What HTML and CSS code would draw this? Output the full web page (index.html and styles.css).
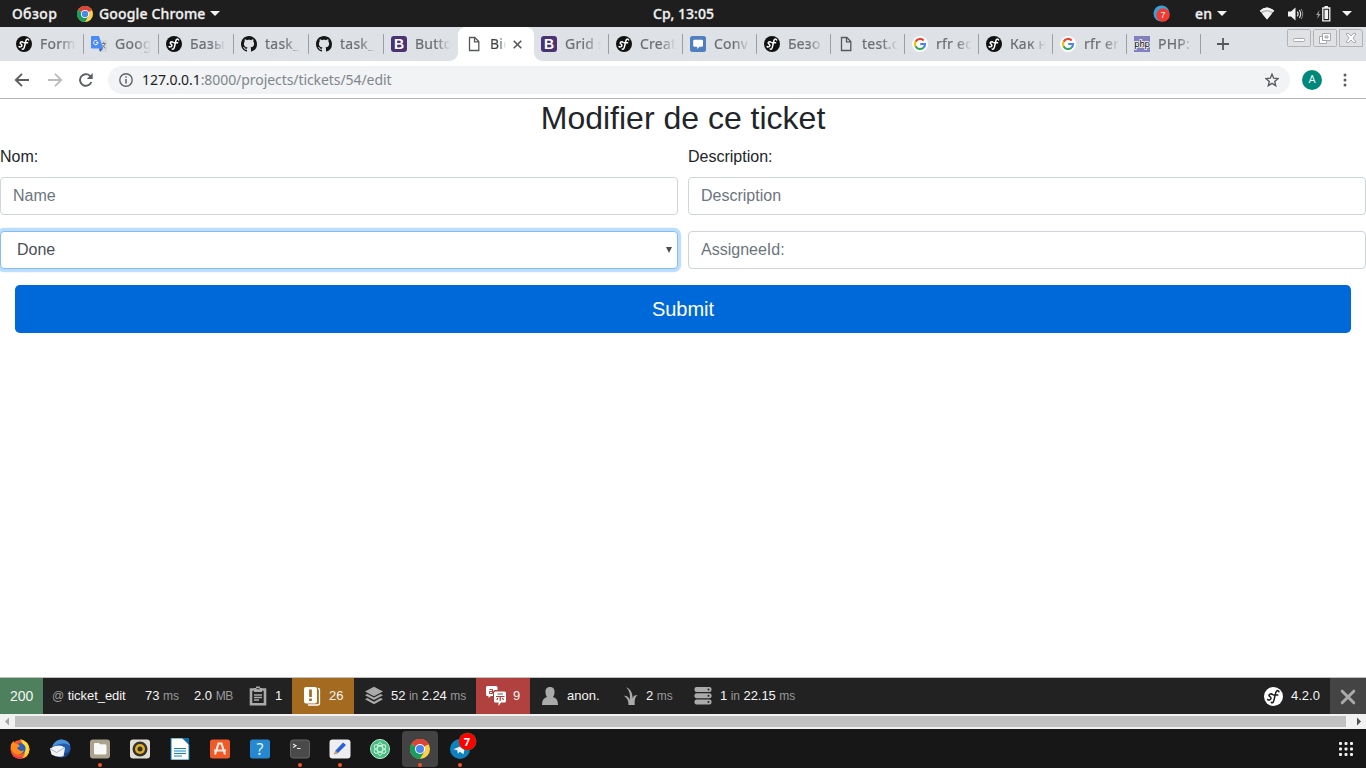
FILE: index.html
```html
<!DOCTYPE html>
<html lang="fr">
<head>
<meta charset="utf-8">
<title>Modifier de ce ticket</title>
<link rel="stylesheet" href="styles.css">
</head>
<body>
<svg class="sprite" aria-hidden="true">
  <symbol id="sf" viewBox="0 0 16 16"><circle cx="8" cy="8" r="8" fill="#111"/><g fill="none" stroke="#fff" stroke-linecap="round"><path d="M7 6.300Q6.500 5.500 5 6q-1.600 1 .1 2.200 1.600 1.300 0 2.500-1.400.7-2-.2" stroke-width="1.500"/><path d="M12.600 4q-.6-1.500-2-.6C9.300 4.300 9 11 7.800 12.600q-.8 1.100-1.600.4M8 6.700h3.600" stroke-width="1.500"/></g></symbol>
  <symbol id="sf-light" viewBox="0 0 16 16"><circle cx="8" cy="8" r="8" fill="#fff"/><g fill="none" stroke="#1c1c1c" stroke-linecap="round"><path d="M7 6.300Q6.500 5.500 5 6q-1.600 1 .1 2.200 1.600 1.300 0 2.500-1.400.7-2-.2" stroke-width="1.300"/><path d="M12.600 4q-.6-1.500-2-.6C9.300 4.300 9 11 7.800 12.600q-.8 1.100-1.600.4M8 6.700h3.600" stroke-width="1.300"/></g></symbol>
  <symbol id="github" viewBox="0 0 16 16"><path fill="#161616" d="M8 0C3.58 0 0 3.58 0 8c0 3.54 2.29 6.53 5.47 7.59.4.07.55-.17.55-.38 0-.19-.01-.82-.01-1.49-2.01.37-2.53-.49-2.69-.94-.09-.23-.48-.94-.82-1.13-.28-.15-.68-.52-.01-.53.63-.01 1.08.58 1.23.82.72 1.21 1.87.87 2.33.66.07-.52.28-.87.51-1.07-1.78-.2-3.64-.89-3.64-3.95 0-.87.31-1.59.82-2.15-.08-.2-.36-1.02.08-2.12 0 0 .67-.21 2.2.82.64-.18 1.32-.27 2-.27s1.36.09 2 .27c1.53-1.04 2.2-.82 2.2-.82.44 1.1.16 1.92.08 2.12.51.56.82 1.27.82 2.15 0 3.07-1.87 3.75-3.65 3.95.29.25.54.73.54 1.48 0 1.07-.01 1.93-.01 2.2 0 .21.15.46.55.38A8.01 8.01 0 0 0 16 8c0-4.42-3.58-8-8-8z"/></symbol>
  <symbol id="file" viewBox="0 0 16 16"><path d="M3.500 1.500h5.300l4 4v9H3.500zM8.500 1.500v4.300h4.300" fill="none" stroke="#55585c" stroke-width="1.300"/></symbol>
  <symbol id="google" viewBox="0 0 16 16"><circle cx="8" cy="8" r="8" fill="#fff"/><g fill="none" stroke-width="2.100"><path d="M11.700 4.400A5 5 0 0 0 3.600 5.700" stroke="#ea4335"/><path d="M3.600 5.600a5 5 0 0 0 0 4.800" stroke="#fbbc05"/><path d="M3.600 10.300a5 5 0 0 0 7.800 1.400" stroke="#34a853"/><path d="M11.300 11.800A5 5 0 0 0 13 8H8.200" stroke="#4285f4"/></g></symbol>
  <symbol id="chrome" viewBox="0 0 20 20"><circle cx="10" cy="10" r="10" fill="#fdd04c"/><path d="M10 10 1.300 5A10 10 0 0 1 18.700 5z" fill="#dc4437"/><path d="M10 10 1.300 5A10 10 0 0 0 10 20l4.300-7.500z" fill="#1a9c5b"/><path d="M10 5h8.700" stroke="#dc4437"/><circle cx="10" cy="10" r="5" fill="#fff"/><circle cx="10" cy="10" r="4" fill="#4a87f0"/></symbol>
  <symbol id="tri" viewBox="0 0 10 5"><path d="M0 0h10L5 5z" fill="#f2f2f2"/></symbol>
</svg>

<header class="topbar">
  <span class="overview">Обзор</span>
  <svg class="i16 top-chrome"><use href="#chrome"/></svg>
  <span class="app">Google Chrome</span>
  <svg class="tri"><use href="#tri"/></svg>
  <span class="clock">Ср, 13:05</span>
  <svg class="tray-tg" viewBox="0 0 18 18"><circle cx="8.500" cy="8.500" r="8" fill="#34a3dc"/><circle cx="10" cy="10" r="6.700" fill="#f5392f"/><text x="10" y="13.300" class="tray-num">7</text></svg>
  <span class="lang">en</span>
  <svg class="tri"><use href="#tri"/></svg>
  <svg class="wifi" viewBox="0 0 16 13"><path d="M.8 3.800Q8-2.600 15.200 3.800L8 12.400z" fill="#bbb"/><path d="M.8 3.800Q8-2.600 15.200 3.800l-1 1.300Q8 1 1.800 5zM3 6.400Q8 2.400 13 6.400l-5 6z" fill="#f2f2f2"/></svg>
  <svg class="sound" viewBox="0 0 16 14"><path d="M0 4.500h3L7.500.500v13L3 9.500H0z" fill="#f2f2f2"/><path d="M9.300 4.600q1.700 2.400 0 4.800M11.300 3q2.800 4 0 8" fill="none" stroke="#ddd" stroke-width="1.200"/><path d="M13.200 2q3.200 5 0 10" fill="none" stroke="#888"/></svg>
  <svg class="battery" viewBox="0 0 15 16"><path d="M3.600 4 0 9h2l-.8 4L4.600 8h-2z" fill="#999"/><path d="M6.800 2h7v12.800h-7z" fill="none" stroke="#f2f2f2" stroke-width="1.300"/><path d="M8.500 0h3.500v2H8.500zM8.500 3.800h3.600v9.200H8.500z" fill="#f2f2f2"/></svg>
  <svg class="tri"><use href="#tri"/></svg>
</header>

<nav class="tabs">
  <div class="tab"><svg class="i16"><use href="#sf"/></svg><span>Form</span></div>
  <div class="tab"><svg class="i16" viewBox="0 0 16 16"><path d="M7 4h9v12H9z" fill="#d5d7da"/><path d="M1 0h7l4 12.500H1a1 1 0 0 1-1-1V1a1 1 0 0 1 1-1z" fill="#4a8af4"/><path d="M8 12.500h4L9 16z" fill="#3457c8"/><path d="M6.500 5.200a2.200 2.200 0 1 0 .5 1.500H5" fill="none" stroke="#fff"/><path d="M10.500 7.500H15M12.700 6v1.500M14 7.500q-1 3.500-3 4.500M11.500 9q1 2 3 3.200" fill="none" stroke="#75818c"/></svg><span>Goog</span></div>
  <div class="tab"><svg class="i16"><use href="#sf"/></svg><span>Базы</span></div>
  <div class="tab"><svg class="i16"><use href="#github"/></svg><span>task_</span></div>
  <div class="tab"><svg class="i16"><use href="#github"/></svg><span>task_</span></div>
  <div class="tab no-line"><b class="boot">B</b><span>Butto</span></div>
  <div class="tab active"><svg class="i16"><use href="#file"/></svg><span>Bie</span><svg class="tab-x" viewBox="0 0 9 9"><path d="m.7.7 7.600 7.600m0-7.600L.7 8.300" stroke="#55585c" stroke-width="1.600"/></svg></div>
  <div class="tab"><b class="boot">B</b><span>Grid s</span></div>
  <div class="tab slim"><svg class="i16"><use href="#sf"/></svg><span>Creat</span></div>
  <div class="tab slim"><svg class="i16" viewBox="0 0 16 16"><rect width="16" height="16" rx="2.500" fill="#4f7fbd"/><path d="M4.500 3.800h7.200q1.300 0 1.300 1.300v4.400q0 1.300-1.300 1.300H9.500L7.200 13v-2.200H4.500q-1.300 0-1.300-1.300V5.100q0-1.300 1.300-1.300z" fill="#fff"/></svg><span>Conv</span></div>
  <div class="tab slim"><svg class="i16"><use href="#sf"/></svg><span>Безо</span></div>
  <div class="tab slim"><svg class="i16"><use href="#file"/></svg><span>test.c</span></div>
  <div class="tab slim"><svg class="i16"><use href="#google"/></svg><span>rfr ec</span></div>
  <div class="tab slim"><svg class="i16"><use href="#sf"/></svg><span>Как н</span></div>
  <div class="tab slim"><svg class="i16"><use href="#google"/></svg><span>rfr er</span></div>
  <div class="tab slim"><svg class="i16" viewBox="0 0 16 16"><rect width="16" height="16" fill="#8180bd"/><text x="8" y="10.500" class="php-text">php</text></svg><span>PHP:</span></div>
  <svg class="plus" viewBox="0 0 12 12"><path d="M6 0v12M0 6h12" stroke="#55585c" stroke-width="1.800"/></svg>
  <div class="win">
    <svg viewBox="0 0 24 18"><rect x=".5" y=".5" width="23" height="17" rx="1"/><rect x="6.500" y="9.500" width="11" height="3" rx="1" class="glyph"/></svg>
    <svg viewBox="0 0 24 18"><rect x=".5" y=".5" width="23" height="17" rx="1"/><path d="M9.500 4.500h8v7h-8zM12 7h3v2h-3zM6.500 7.500h3v4h4v3h-7z" class="glyph"/></svg>
    <svg viewBox="0 0 24 18"><path d="M.5.500h20q3 0 3 3v14H.5z"/><path d="m7 5 2-1 3 3 3-3 2 1-3 4 3 4-2 1-3-3-3 3-2-1 3-4z" class="glyph"/></svg>
  </div>
</nav>

<div class="addressbar">
  <svg class="nav-i back" viewBox="0 0 16 14"><path d="M15 7H2M8 .8 1.800 7 8 13.200" fill="none" stroke="#5a5d61" stroke-width="1.900"/></svg>
  <svg class="nav-i fwd" viewBox="0 0 16 14"><path d="M1 7h13M8 .8 14.200 7 8 13.200" fill="none" stroke="#babcbe" stroke-width="1.900"/></svg>
  <svg class="reload" viewBox="0 0 14 14"><path d="M12.300 9A5.800 5.800 0 1 1 11 2.900l1.500 1.500" fill="none" stroke="#5a5d61" stroke-width="1.900"/><path d="M13.700 0v6H7.800z" fill="#5a5d61"/></svg>
  <div class="url">
    <svg class="info" viewBox="0 0 14 14"><circle cx="7" cy="7" r="6.200" fill="none" stroke="#5f6368" stroke-width="1.400"/><path d="M7 6v4.500M7 3.300v1.500" stroke="#5f6368" stroke-width="1.500"/></svg>
    <span class="url-text"><b>127.0.0.1</b>:8000/projects/tickets/54/edit</span>
    <svg class="star" viewBox="0 0 14 14"><path d="m7 1.200 1.700 4 4.300.4-3.300 2.800 1 4.300L7 10.400l-3.700 2.300 1-4.300L1 5.600l4.300-.4z" fill="none" stroke="#5a5d61" stroke-width="1.400"/></svg>
  </div>
  <span class="avatar">A</span>
  <svg class="dots" viewBox="0 0 4 14"><g fill="#5a5d61"><circle cx="2" cy="2" r="1.500"/><circle cx="2" cy="7" r="1.500"/><circle cx="2" cy="12" r="1.500"/></g></svg>
</div>

<main class="page">
  <h2>Modifier de ce ticket</h2>
  <form class="ticket-form">
    <div class="field"><label for="nom">Nom:</label><input id="nom" placeholder="Name"></div>
    <div class="field"><label for="desc">Description:</label><input id="desc" placeholder="Description"></div>
    <div class="select"><span>Done</span><svg class="caret" viewBox="0 0 6 6"><path d="M0 0h6L3 6z" fill="#495057"/></svg></div>
    <input placeholder="AssigneeId:">
    <button type="button" class="submit">Submit</button>
  </form>
</main>

<section class="debug">
  <div class="blk status">200</div>
  <div class="blk route"><p><i>@</i> ticket_edit</p></div>
  <div class="blk time"><p>73 <i>ms</i></p></div>
  <div class="blk memory"><p>2.0 <i>MB</i></p></div>
  <div class="blk forms"><svg viewBox="0 0 18 20"><path d="M2 3.500h14v14.800H2z" fill="none" stroke="#aaa" stroke-width="2.600"/><path d="M5 2h2V.500h4V2h2v4H5z" fill="#aaa"/><path d="M7.500 2.700h3" stroke="#222"/><path d="M5 9h8M5 11.500h8M5 14h5" stroke="#aaa" stroke-width="1.400"/></svg><p>1</p></div>
  <div class="blk warn"><svg viewBox="0 0 18 20"><path d="M15 2.500q1.500 0 1.500 1.500v13q0 2-2 2H5" fill="none" stroke="#fff" stroke-width="1.300"/><rect x="1" y="1" width="13" height="16.500" rx="2" fill="#fff"/><path d="M7.500 3.500v7.500M7.500 12.500v2.500" stroke="#a46a1f" stroke-width="2.700"/></svg><p>26</p></div>
  <div class="blk cache"><svg viewBox="0 0 18 20"><g fill="#aaa"><path d="m9 .8 9 4.700-9 4.700-9-4.700z"/><path d="m0 9.200 2.300-1.200L9 11.600 15.700 8 18 9.200l-9 4.900z"/><path d="m0 13.300 2.300-1.200L9 15.700l6.700-3.600 2.300 1.200-9 5z"/></g></svg><p>52 <i>in</i> 2.24 <i>ms</i></p></div>
  <div class="blk trans"><svg viewBox="0 0 20 20"><path d="M1.500 0H10q1.500 0 1.500 1.500V4H9q-2 0-2 2v4H5l-2.500 2v-2H1.500Q0 10 0 8.500v-7Q0 0 1.500 0z" fill="#fff"/><path d="M3.500 3.500h3v4h-3v-2h3" fill="none" stroke="#b13d3c"/><path d="M9.500 5.500h9q1.500 0 1.500 1.500v8q0 1.500-1.500 1.500H15L12.500 20v-3.500h-3Q8 16.500 8 15V7q0-1.500 1.500-1.500z" fill="#fff"/><path d="M11.500 8h5.500M10 10.500h8.500M14.200 10.500v4.500M11.800 12l-1 2M16.500 12l1 2" stroke="#b13d3c" stroke-width="1.200"/></svg><p>9</p></div>
  <div class="blk user"><svg viewBox="0 0 16 18"><path d="M8 0q4.600 0 4.600 4.800Q12.600 8 11 10q5 1.200 5 7.200v.8H0v-.8Q0 11.200 5 10 3.400 8 3.400 4.800 3.400 0 8 0z" fill="#aaa"/></svg><p>anon.</p></div>
  <div class="blk twig"><svg viewBox="0 0 14 18"><path d="M2 0q6.500 2.500 6.800 11.500Q9.500 7 14 8.500q-4 .5-3.300 9.500H4.500Q5 12.500 0 8.800q4-.3 5.800 4.200Q7 5 2 0z" fill="#aaa"/></svg><p>2 <i>ms</i></p></div>
  <div class="blk db"><svg viewBox="0 0 18 18"><g fill="#aaa"><rect width="17" height="5" x=".5" rx="2"/><rect x=".5" y="6.300" width="17" height="5" rx="2"/><rect x=".5" y="12.600" width="17" height="5" rx="2"/></g><g fill="#222"><circle cx="14.500" cy="2.500" r="1"/><circle cx="14.500" cy="8.800" r="1"/><circle cx="14.500" cy="15.100" r="1"/></g></svg><p>1 <i>in</i> 22.15 <i>ms</i></p></div>
  <div class="blk version"><svg><use href="#sf-light"/></svg><p>4.2.0</p></div>
  <div class="blk close"><svg viewBox="0 0 16 16"><path d="m2.200 2.200 11.600 11.600m0-11.600L2.200 13.800" stroke="#aaa" stroke-width="3" stroke-linecap="round"/></svg></div>
</section>

<div class="scroll">
  <svg viewBox="0 0 15 15"><path d="M9 3.500v8L5 7.500z" fill="#a3a3a3"/></svg>
  <div class="thumb"></div>
  <svg class="sright" viewBox="0 0 15 15"><path d="M6 3.500v8l4-4z" fill="#505050"/></svg>
</div>

<footer class="dock">
  <div class="app-i"><svg viewBox="0 0 20 20"><circle cx="10" cy="10.500" r="9.500" fill="#fb5a22"/><path d="M10 0q9 2 9.500 10.500Q19 18 11.500 19.500 18 13 14 7z" fill="#ffcb2e"/><path d="M12 1q7 3 6 10l-3 4-2-9z" fill="#ffde3a"/><circle cx="10" cy="9.800" r="5.700" fill="#2c5fb5"/><path d="M.6 8Q1 4 3.500 2l1 2.500Q8 4 10 7L7 9q2 4 7 2.500Q12 16 7.500 15.500 2 15 .6 8z" fill="#ff8a1e"/><path d="M.6 9q1 7 6 8.500t9-1Q12 20 8 19.800 1 18 .6 9z" fill="#e9325d"/></svg></div>
  <div class="app-i"><svg viewBox="0 0 22 20"><circle cx="12.500" cy="9.500" r="9" fill="#245cac"/><path d="M3 8Q6 0 13 .500q7 .5 8.500 7Q16 1.500 3 8z" fill="#4c90d9"/><path d="M1 9.500q6-4 12-2.500l3 2-1.500 8Q9 19 2.500 15.500z" fill="#f0f2f5"/><path d="m1 9.500 6.500 4L16 8.500" fill="none" stroke="#abb7c7"/><path d="M15 18.500q6-2 6.500-9-2 5-6 4.500z" fill="#17407f"/></svg></div>
  <div class="app-i run"><svg viewBox="0 0 20 20"><rect y=".5" width="20" height="19" rx="3" fill="#aba28d"/><path d="M4 5q0-1 1-1h4l1 1.300h5q1.500 0 1.500 1.500V14q0 1.500-1.500 1.500H5.500Q4 15.500 4 14z" fill="#f8f8f6"/></svg></div>
  <div class="app-i"><svg viewBox="0 0 20 20"><rect y=".5" width="20" height="19" rx="3" fill="#e1ded6"/><circle cx="10" cy="10" r="7.500" fill="#34332f"/><circle cx="10" cy="10" r="5" fill="#e4ae20"/><circle cx="10" cy="10" r="2.500" fill="#34332f"/></svg></div>
  <div class="app-i"><svg viewBox="0 0 20 22"><path d="M1 0h12l6 6v16H1z" fill="#fff"/><path d="M1 0h12l6 6v16H1z" fill="none" stroke="#0c7bb0"/><path d="M12 0h7v7z" fill="#0c6da5"/><path d="M4 10.500h12M4 13h12M4 15.500h12M4 18h8" stroke="#1384be" stroke-width="1.100"/></svg></div>
  <div class="app-i"><svg viewBox="0 0 20 20"><rect y=".5" width="20" height="19" rx="2.500" fill="#ee5b28"/><path d="m5 15.500 3.500-11h3l3.500 11M4 11.500h12" fill="none" stroke="#ffe9e0" stroke-width="2.100"/></svg></div>
  <div class="app-i"><svg viewBox="0 0 20 20"><rect y=".5" width="20" height="19" rx="2.500" fill="#2588d0"/><text x="10" y="15.500" class="help-text">?</text></svg></div>
  <div class="app-i run"><svg viewBox="0 0 20 20"><rect x=".5" y="1" width="19" height="18" rx="2.500" fill="#4a4a4a" stroke="#666"/><path d="m3 5 3 1.700-3 1.700M7 9.500h3.500" fill="none" stroke="#eee" stroke-width="1.100"/></svg></div>
  <div class="app-i run"><svg viewBox="0 0 22 20"><rect x=".5" y=".5" width="21" height="19" rx="3" fill="#eeedf0"/><path d="m5 15.500 1.500-4L14 3.500l3 2.500L9 14z" fill="#2b5fd9"/><path d="m5 15.500 1.500-4L9 14z" fill="#d9a55e"/></svg></div>
  <div class="app-i"><svg viewBox="0 0 20 20"><circle cx="10" cy="10" r="9.500" fill="#45bd80" stroke="#c3ecd5"/><g fill="none" stroke="#d4f4e2" stroke-width=".9"><ellipse cx="10" cy="10" rx="2.700" ry="6.500"/><ellipse cx="10" cy="10" rx="2.700" ry="6.500" transform="rotate(60 10 10)"/><ellipse cx="10" cy="10" rx="2.700" ry="6.500" transform="rotate(120 10 10)"/></g></svg></div>
  <div class="app-i run current"><svg><use href="#chrome"/></svg></div>
  <div class="app-i run"><svg viewBox="0 0 20 20"><circle cx="10" cy="10" r="10" fill="#0f82be"/><path d="m3.500 10.200 12-5-2 10-3.600-2.500-2 2-.6-3.500z" fill="#eaf4fa"/></svg><b class="badge">7</b></div>
  <svg class="grid" viewBox="0 0 14 14"><g fill="#f2f2f2"><rect width="3" height="3" rx="1"/><rect x="5.500" width="3" height="3" rx="1"/><rect x="11" width="3" height="3" rx="1"/><rect y="5.500" width="3" height="3" rx="1"/><rect x="5.500" y="5.500" width="3" height="3" rx="1"/><rect x="11" y="5.500" width="3" height="3" rx="1"/><rect y="11" width="3" height="3" rx="1"/><rect x="5.500" y="11" width="3" height="3" rx="1"/><rect x="11" y="11" width="3" height="3" rx="1"/></g></svg>
</footer>
</body>
</html>
```
FILE: styles.css
```css
* { box-sizing: border-box; }
body {
  margin: 0;
  width: 1366px;
  height: 768px;
  overflow: hidden;
  display: flex;
  flex-direction: column;
  background: #fff;
  font-family: "Liberation Sans", Arial, sans-serif;
}
svg { display: block; flex: none; }
.sprite { display: none; }
.i16 { width: 16px; height: 16px; }
.boot {
  width: 16px;
  height: 16px;
  border-radius: 3px;
  background: #4b3273;
  color: #fff;
  font: bold 14px/16px "Liberation Sans", sans-serif;
  text-align: center;
}
.php-text {
  font: 8.5px "DejaVu Sans", sans-serif;
  text-anchor: middle;
  fill: #000;
  stroke: #fff;
  stroke-width: 1.6px;
  paint-order: stroke;
  letter-spacing: -.3px;
}
.help-text { font: 16px "Noto Sans", sans-serif; text-anchor: middle; fill: #e8f5ff; }

/* desktop top bar */
.topbar {
  height: 27px;
  flex: none;
  display: flex;
  align-items: center;
  background: #1e1e1e;
  color: #f0f0f0;
  font: 500 14px/27px "Noto Sans", sans-serif;
  letter-spacing: .15px;
  -webkit-text-stroke: .3px #f0f0f0;
  white-space: nowrap;
}
.tri { width: 10px; height: 5px; }
.overview { margin-left: 12px; width: 65px; letter-spacing: .4px; }
.app { margin-left: 6px; width: 111px; }
.clock { margin-left: 433px; width: 500px; letter-spacing: 0; }
.tray-tg { width: 18px; height: 18px; }
.tray-num { font: 9px "Liberation Sans", sans-serif; text-anchor: middle; fill: #fff; -webkit-text-stroke: 0; }
.lang { margin-left: 24px; width: 22px; }
.wifi { width: 16px; height: 13px; margin-left: 32px; }
.sound { width: 16px; height: 14px; margin-left: 13px; }
.battery { width: 15px; height: 16px; margin: 0 11px 0 12px; }

/* tab strip */
.tabs {
  height: 34px;
  flex: none;
  display: flex;
  align-items: center;
  padding-left: 9px;
  background: #dee1e6;
}
.tab {
  width: 75px;
  height: 34px;
  flex: none;
  display: flex;
  align-items: center;
  padding-left: 7px;
  background: linear-gradient(#9c9fa4, #9c9fa4) right center / 1px 20px no-repeat;
}
.slim { width: 74px; }
.no-line { width: 74px; background: none; }
.tab span {
  width: 36px;
  margin-left: 8px;
  overflow: hidden;
  white-space: nowrap;
  color: #6b6e73;
  font: 14px/20px "Noto Sans", sans-serif;
  letter-spacing: .25px;
  -webkit-text-stroke: .2px #6b6e73;
  -webkit-mask-image: linear-gradient(90deg, #000 55%, transparent);
  mask-image: linear-gradient(90deg, #000 55%, transparent);
}
.tab.active {
  position: relative;
  width: 76px;
  padding-left: 8px;
  background: #fff;
  border-radius: 8px 8px 0 0;
}
.tab.active::before, .tab.active::after {
  content: "";
  position: absolute;
  bottom: 0;
  width: 8px;
  height: 8px;
}
.tab.active::before { left: -8px; background: radial-gradient(circle at 0 0, transparent 7.5px, #fff 8px); }
.tab.active::after { right: -8px; background: radial-gradient(circle at 100% 0, transparent 7.5px, #fff 8px); }
.tab.active span { width: 16px; color: #3c4043; }
.tab-x { width: 9px; height: 9px; margin-left: 7px; }
.plus { width: 12px; height: 12px; margin-left: 16px; }
.win { display: flex; gap: 2px; margin: -12px 0 0 58px; }
.win svg { width: 24px; height: 18px; fill: #dfe1e5; stroke: #b3b3b3; }
.win .glyph { fill: #fff; fill-rule: evenodd; stroke: #a0a0a3; stroke-width: .9; }

/* address bar */
.addressbar {
  height: 38px;
  flex: none;
  display: flex;
  align-items: center;
  border-bottom: 1px solid #b5b4b6;
  background: #fff;
}
.nav-i { width: 16px; height: 14px; }
.back { margin-left: 14px; }
.fwd { margin-left: 17px; }
.reload { width: 14px; height: 14px; margin-left: 16px; }
.url {
  width: 1182px;
  height: 28px;
  margin-left: 15px;
  padding: 0 11px;
  display: flex;
  align-items: center;
  border-radius: 14px;
  background: #f1f3f4;
}
.info { width: 14px; height: 14px; }
.url-text { flex: 1; margin-left: 9px; color: #80868b; font: 14px/20px "Noto Sans", sans-serif; letter-spacing: -.07px; }
.url-text b { font-weight: 400; color: #202124; }
.star { width: 14px; height: 14px; }
.avatar {
  width: 20px;
  height: 20px;
  margin-left: 12px;
  border-radius: 50%;
  background: #00897b;
  color: #fff;
  font: 11px/20px Roboto, sans-serif;
  text-align: center;
}
.dots { width: 4px; height: 14px; margin-left: 20.500px; }

/* page content */
.page { height: 579px; flex: none; color: #212529; border-bottom: 1px solid #bfbfbf; }
.page h2 { margin: 0 0 8px; font-size: 32px; line-height: 38.4px; font-weight: 400; text-align: center; }
.ticket-form { display: grid; grid-template-columns: 1fr 1fr; gap: 16px 10px; }
.field { display: flex; flex-direction: column; gap: 8px; line-height: 24px; }
.ticket-form input, .select {
  width: 100%;
  height: 38px;
  padding: 6px 12px;
  border: 1px solid #ced4da;
  border-radius: 4px;
  background: #fff;
  color: #495057;
  font: 16px/24px "Liberation Sans", Arial, sans-serif;
}
.ticket-form input::placeholder { color: #6c757d; opacity: 1; }
.ticket-form .select {
  display: flex;
  align-items: center;
  justify-content: space-between;
  padding: 0 5px 0 16px;
  border-color: #80bdff;
  box-shadow: 0 0 0 3.2px rgba(0, 123, 255, .25);
}
.caret { width: 6px; height: 6px; }
.submit {
  grid-column: 1 / -1;
  height: 48px;
  margin: 0 15px;
  border: 0;
  border-radius: 4.8px;
  background: #0069d9;
  color: #fff;
  font: 20px/30px "Liberation Sans", Arial, sans-serif;
}

/* profiler toolbar */
.debug { height: 36px; flex: none; display: flex; background: #222; color: #f5f5f5; font-size: 13px; }
.blk { display: flex; align-items: center; height: 36px; }
.blk p { margin: 0 0 1px; white-space: nowrap; }
.blk i { font-style: normal; font-size: 12px; color: #999; }
.blk svg { width: 18px; height: 20px; margin-right: 8px; }
.status { width: 43px; padding-left: 10px; background: #4f805d; font-size: 14px; }
.route { width: 93px; padding-left: 9px; letter-spacing: -.05px; }
.time { width: 49px; padding-left: 9px; }
.memory { width: 55px; padding-left: 9px; }
.memory i { letter-spacing: -.4px; }
.forms { width: 52px; padding-left: 9px; }
.warn { width: 62px; padding-left: 11px; background: #a46a1f; }
.cache { width: 122px; padding-left: 11px; }
.cache p, .db p { letter-spacing: -.06px; }
.trans { width: 54px; padding-left: 10px; background: #b0413e; }
.trans svg { width: 20px; margin-right: 7px; }
.user { width: 82px; padding-left: 12px; }
.user svg { width: 16px; height: 18px; margin-right: 9px; }
.twig { width: 73px; padding-left: 12px; }
.twig svg { width: 14px; height: 18px; }
.db { width: 120px; padding-left: 9px; }
.db svg { height: 18px; }
.version { margin-left: auto; width: 66px; }
.version svg { width: 19px; height: 19px; }
.close { width: 36px; padding: 2px 0 0 10px; background: #444; }
.close svg { width: 16px; height: 16px; }

/* horizontal scrollbar */
.scroll { height: 15px; flex: none; display: flex; align-items: center; background: #f1f1f1; }
.scroll svg { width: 15px; height: 15px; }
.thumb { width: 1331px; height: 11px; background: #c1c1c1; }
.scroll .sright { margin-left: 5px; }

/* dock */
.dock { height: 39px; flex: none; display: flex; align-items: center; background: #171717; }
.app-i { position: relative; width: 40px; height: 39px; display: flex; align-items: center; justify-content: center; }
.app-i svg { position: relative; width: 20px; height: 20px; margin-top: 1px; }
.app-i:nth-child(2) svg, .app-i:nth-child(9) svg { width: 22px; }
.app-i:nth-child(5) svg { height: 22px; }
.run::after {
  content: "";
  position: absolute;
  bottom: 1px;
  left: 18px;
  width: 4px;
  height: 4px;
  border-radius: 50%;
  background: #e95420;
}
.current::before {
  content: "";
  position: absolute;
  inset: 2px 2px 1px;
  border-radius: 4px;
  background: #434343;
}
.badge {
  position: absolute;
  top: 4px;
  left: 18.500px;
  width: 17px;
  height: 17px;
  border-radius: 50%;
  background: #f00;
  box-shadow: 0 0 0 .5px #2f7d32;
  color: #fff;
  font: bold 11px/17px "Noto Sans", sans-serif;
  text-align: center;
}
.dock .grid { width: 14px; height: 14px; margin-left: auto; margin-right: 13px; }
```
